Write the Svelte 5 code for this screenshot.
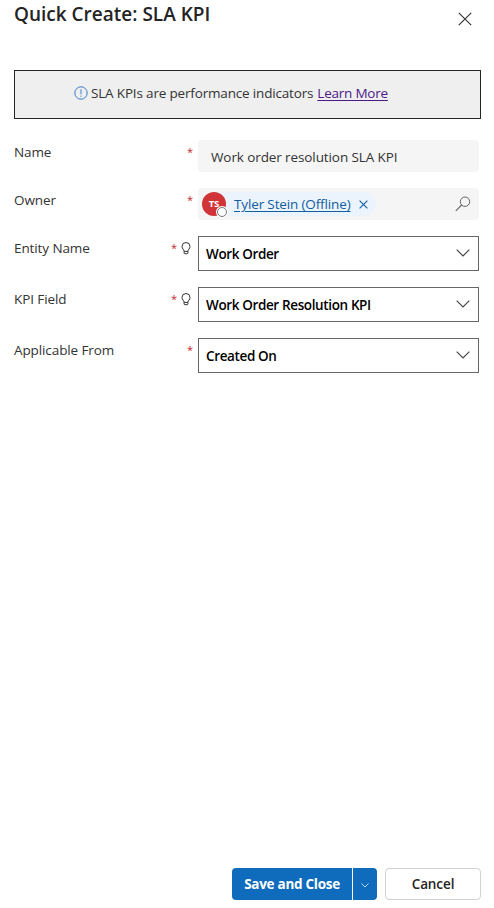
<script>
  const rows = [
    { label: 'Name', kind: 'text', value: 'Work order resolution SLA KPI' },
    { label: 'Owner', kind: 'lookup', value: 'Tyler Stein (Offline)' },
    { label: 'Entity Name', kind: 'select', hint: true, value: 'Work Order' },
    { label: 'KPI Field', kind: 'select', hint: true, value: 'Work Order Resolution KPI' },
    { label: 'Applicable From', kind: 'select', value: 'Created On' }
  ];
</script>

<div class="panel">
  <header>
    <h1>Quick Create: SLA KPI</h1>
    <button class="close" aria-label="Close">
      <svg width="14" height="14" viewBox="0 0 14 14"><path d="M.8.8 13.2 13.2M13.2.8.8 13.2" fill="none" stroke="#333" stroke-width="1.15" /></svg>
    </button>
  </header>

  <div class="notice">
    <svg width="14" height="14" viewBox="0 0 14 14">
      <circle cx="7" cy="7" r="6.2" fill="none" stroke="#3b7cc9" />
      <path d="M7 3.3v5M7 9.6v1.2" stroke="#3b7cc9" fill="none" />
    </svg>
    <span class="msg">SLA KPIs are performance indicators</span>
    <a class="more" href="#learn">Learn More</a>
  </div>

  <div class="form">
    {#each rows as row}
      <div class="row">
        <div class="label">
          <span class="name">{row.label}</span>
          <span class="star" class:hinted={row.hint}>*</span>
          {#if row.hint}
            <svg class="bulb" width="10" height="14" viewBox="0 0 10 14">
              <path d="M3.1 9.6V8.9C2.8 7.5 1 6.7 1 4.5a4 4 0 0 1 8 0C9 6.7 7.2 7.5 6.9 8.9V10.9a.8.8 0 0 1-.8.8H3.9a.8.8 0 0 1-.8-.8V9.4H6.9" fill="none" stroke="#333" stroke-width="1" />
            </svg>
          {/if}
        </div>
        {#if row.kind === 'text'}
          <div class="field input"><span class="val">{row.value}</span></div>
        {:else if row.kind === 'lookup'}
          <div class="field lookup">
            <div class="chip">
              <span class="avatar">TS<i></i></span>
              <a class="person" href="#owner">{row.value}</a>
              <svg width="9" height="9" viewBox="0 0 9 9"><path d="M.6.6 8.4 8.4M8.4.6.6 8.4" fill="none" stroke="#115ea3" stroke-width="1.1" /></svg>
            </div>
            <svg class="search" width="16" height="16" viewBox="0 0 16 16"><path d="M.8 14.9 6.7 9" fill="none" stroke="#666" stroke-width="1.1" /><circle cx="10" cy="5.7" r="4.7" fill="none" stroke="#666" /></svg>
          </div>
        {:else}
          <div class="field select">
            <span class="val">{row.value}</span>
            <svg width="14" height="8" viewBox="0 0 14 8"><path d="M.7.7 7 7 13.3.7" fill="none" stroke="#444" stroke-width="1.15" /></svg>
          </div>
        {/if}
      </div>
    {/each}
  </div>

  <footer>
    <div class="split">
      <button class="save">Save and Close</button>
      <button class="drop" aria-label="More save options">
        <svg width="8" height="5" viewBox="0 0 8 5"><path d="M.5.5 4 4 7.5.5" fill="none" stroke="#cfe4f7" stroke-width=".9" /></svg>
      </button>
    </div>
    <button class="cancel">Cancel</button>
  </footer>
</div>

<style>
  :global(body) { margin: 0; background: #fff; }
  .panel {
    box-sizing: border-box;
    width: 494px;
    height: 908px;
    display: flex;
    flex-direction: column;
    padding: 0 13px 8px 14px;
    font-family: "Open Sans", "Noto Sans", sans-serif;
    font-size: 13.5px;
    line-height: 20px;
    letter-spacing: -0.1px;
    color: #333;
    overflow: hidden;
  }
  button { font: inherit; letter-spacing: inherit; border: 0; padding: 0; margin: 0; }
  header { display: flex; justify-content: space-between; height: 70px; }
  h1 { margin: 0; font-size: 19px; line-height: 28px; font-weight: 600; letter-spacing: 0; color: #242424; white-space: nowrap; }
  .close { width: 14px; height: 14px; margin: 12px 9px 0 0; background: none; display: flex; }
  .notice {
    box-sizing: border-box;
    height: 49px;
    border: 1px solid #242424;
    background: #efefef;
    display: flex;
    align-items: center;
    padding: 0 0 4px 59px;
    white-space: nowrap;
    letter-spacing: -0.17px;
  }
  .msg { margin: 0 4px 0 3px; }
  .more { color: #4b1a87; text-decoration: underline; text-underline-offset: 2px; letter-spacing: -0.22px; }
  .form { display: flex; flex-direction: column; gap: 16px; margin-top: 21px; padding-right: 2px; }
  .row { display: flex; }
  .label { width: 184px; display: flex; align-items: flex-start; padding-top: 2px; box-sizing: border-box; white-space: nowrap; }
  .name { flex: 1; }
  .star { color: #c4262e; width: 6px; margin-right: 5px; font-size: 11px; }
  .star.hinted { margin-right: 4px; }
  .bulb { margin: 4px 7px 0 0; }
  .field { box-sizing: border-box; width: 281px; display: flex; align-items: center; white-space: nowrap; }
  .input, .lookup { height: 32px; background: #f5f5f5; border-radius: 4px; }
  .input { padding: 2px 0 0 13px; }
  .lookup { justify-content: space-between; padding: 0 8px 0 4px; }
  .chip { display: flex; align-items: center; height: 24px; width: 174px; border-radius: 12px; background: #ebf3fc; }
  .avatar { position: relative; width: 24px; height: 24px; border-radius: 50%; background: #d13438; color: #fff; font-size: 9.5px; font-weight: 700; line-height: 24px; text-align: center; }
  .avatar i { position: absolute; right: -1px; bottom: -1px; box-sizing: border-box; width: 10px; height: 10px; border: 1.5px solid #777; border-radius: 50%; background: #fff; box-shadow: 0 0 0 1px #fff; }
  .person { margin: 0 9px 0 8px; color: #115ea3; text-decoration: underline; text-underline-offset: 2px; letter-spacing: -0.14px; }
  .select { height: 35px; border: 1px solid #666; justify-content: space-between; padding: 0 8px 0 7px; color: #000; font-weight: 600; letter-spacing: -0.37px; }
  .select svg { margin-top: -1px; }
  footer { margin-top: auto; display: flex; justify-content: flex-end; gap: 8px; height: 32px; font-weight: 700; letter-spacing: -0.28px; }
  .split { display: flex; gap: 1px; }
  .save { width: 120px; background: #0f6cbd; color: #fff; border-radius: 4px 0 0 4px; white-space: nowrap; }
  .drop { width: 24px; background: #0f6cbd; border-radius: 0 4px 4px 0; display: flex; align-items: center; justify-content: center; padding-top: 3px; }
  .cancel { width: 96px; box-sizing: border-box; background: #fff; color: #242424; border: 1px solid #d1d1d1; border-radius: 4px; font-weight: 600; letter-spacing: -0.1px; }
</style>
